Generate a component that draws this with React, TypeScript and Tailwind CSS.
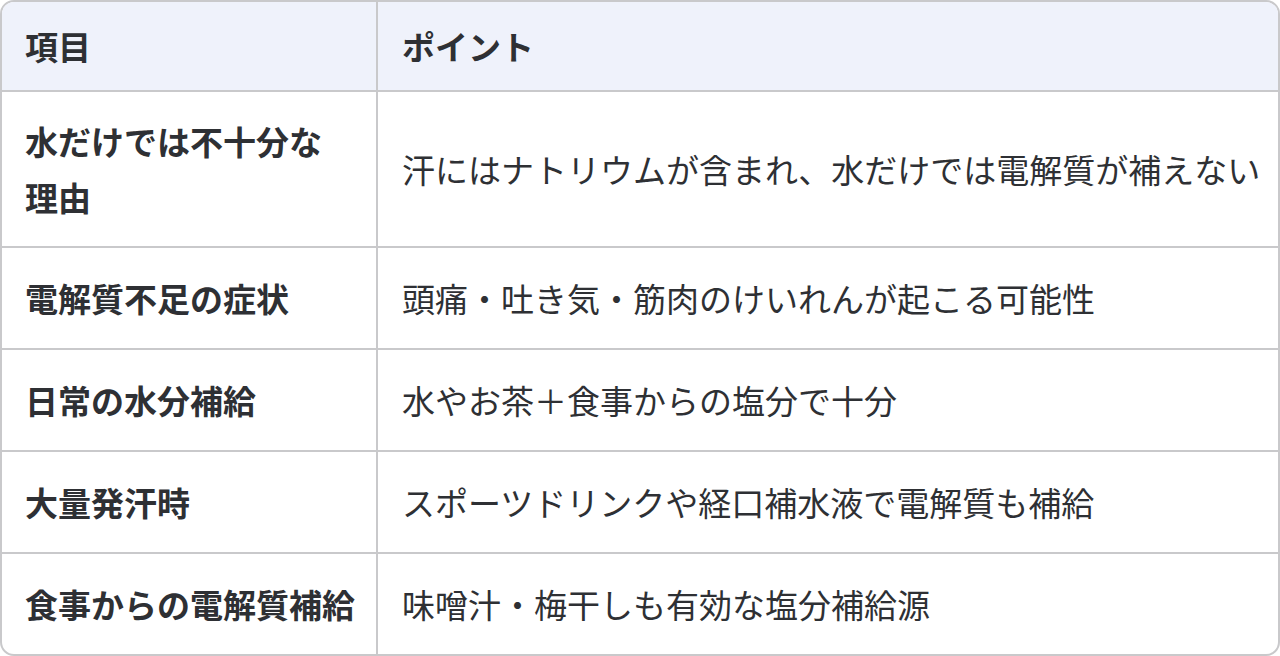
import React from "react";

const rows: { k: React.ReactNode; v: string; h: string }[] = [
  { k: <>水だけでは不十分な<br />理由</>, v: "汗にはナトリウムが含まれ、水だけでは電解質が補えない", h: "h-[156px]" },
  { k: "電解質不足の症状", v: "頭痛・吐き気・筋肉のけいれんが起こる可能性", h: "h-[102px]" },
  { k: "日常の水分補給", v: "水やお茶＋食事からの塩分で十分", h: "h-[102px]" },
  { k: "大量発汗時", v: "スポーツドリンクや経口補水液で電解質も補給", h: "h-[102px]" },
  { k: "食事からの電解質補給", v: "味噌汁・梅干しも有効な塩分補給源", h: "h-[100px]" },
];

export default function App() {
  return (
    <div
      className="w-[1280px] h-[656px] bg-white text-[#2e3034] text-[33px]"
      style={{ fontFamily: '"Noto Sans CJK JP", "Noto Sans", sans-serif' }}
    >
      <div className="w-full h-full border-2 border-[#c9c9cb] rounded-[14px] overflow-hidden flex flex-col">
        <div className="flex h-[90px] shrink-0 bg-[#eff2fb] border-b-2 border-[#c9c9cb] font-bold">
          <div className="w-[376px] shrink-0 border-r-2 border-[#c9c9cb] px-[23px] flex items-center leading-[56px]">項目</div>
          <div className="flex-1 px-[24px] flex items-center leading-[56px]">ポイント</div>
        </div>
        {rows.map((r, i) => (
          <div
            key={i}
            className={`flex shrink-0 ${r.h} ${i < rows.length - 1 ? "border-b-2 border-[#c9c9cb]" : ""}`}
          >
            <div className="w-[376px] shrink-0 border-r-2 border-[#c9c9cb] px-[23px] flex items-center font-bold leading-[56px] whitespace-nowrap">
              <div>{r.k}</div>
            </div>
            <div className="flex-1 px-[24px] flex items-center leading-[56px] whitespace-nowrap">{r.v}</div>
          </div>
        ))}
      </div>
    </div>
  );
}
